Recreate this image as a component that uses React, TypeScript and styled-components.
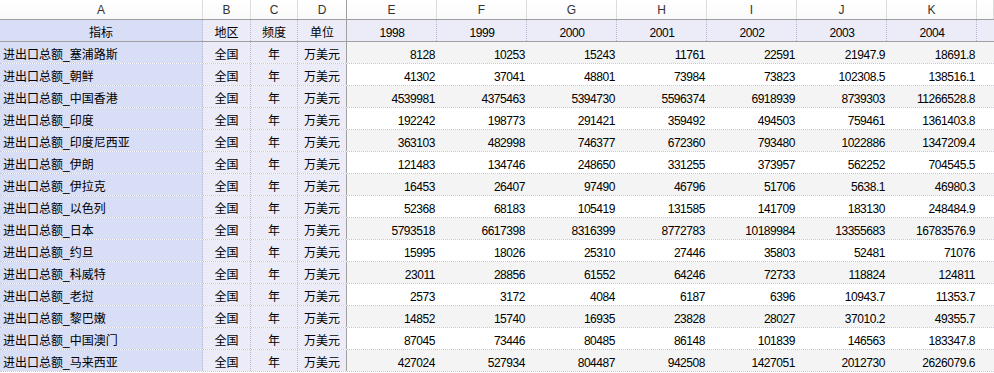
import React from "react";
import styled, { createGlobalStyle, css } from "styled-components";

const GlobalStyle = createGlobalStyle`
  html, body {
    margin: 0;
    padding: 0;
    background: #ffffff;
  }
  body {
    font-family: "Liberation Sans", "Noto Sans CJK SC", sans-serif;
    color: #000;
  }
`;

const COLS = "203px 48px 47px 49px repeat(7, 90px) 1fr";

const Sheet = styled.div`
  width: 994px;
  height: 373px;
  overflow: hidden;
  background: #fff;
`;

const Row = styled.div`
  display: grid;
  grid-template-columns: ${COLS};
`;

const LetterRow = styled(Row)`
  height: 20px;
  border-bottom: 1px solid #a0a0a0;
  box-sizing: border-box;
  background: linear-gradient(#ffffff, #fafafa);
`;

const Letter = styled.div<{ $freeze?: boolean }>`
  display: flex;
  align-items: flex-end;
  justify-content: center;
  padding-bottom: 1px;
  font-size: 12px;
  line-height: 15px;
  color: #333;
  box-sizing: border-box;
  border-right: 1px solid ${(p) => (p.$freeze ? "#a0a0a0" : "#dcdcdc")};
`;

type Tone = "key" | "dim" | "even" | "odd" | "head";

const toneBg: Record<Tone, string> = {
  key: "#d9def7",
  dim: "#ececf9",
  head: "#ececf9",
  even: "#f4f4f4",
  odd: "#ffffff",
};

const Cell = styled.div<{
  $tone: Tone;
  $align?: "left" | "center" | "right";
  $edge?: "dot" | "solid" | "none";
  $num?: boolean;
}>`
  display: flex;
  align-items: flex-end;
  overflow: hidden;
  white-space: nowrap;
  box-sizing: border-box;
  padding: 0 3px 1px 3px;
  background: ${(p) => toneBg[p.$tone]};
  justify-content: ${(p) =>
    p.$align === "right" ? "flex-end" : p.$align === "center" ? "center" : "flex-start"};
  font-size: 12px;
  line-height: 14px;
  color: #000;
  ${(p) =>
    p.$edge === "solid"
      ? css`border-right: 1px solid #a0a0a0;`
      : p.$edge === "dot"
      ? css`border-right: 1px dotted #b4b7cf;`
      : ""}
  ${(p) =>
    p.$num &&
    css`
      letter-spacing: -0.45px;
      padding-right: 2px;
    `}
`;

const HeadRow = styled(Row)`
  height: 22px;
  border-bottom: 1px solid #a0a0a0;
  box-sizing: border-box;
`;

const DataRow = styled(Row)`
  height: 22px;
  box-sizing: border-box;
  border-bottom: 1px dotted #c6c7d6;
`;

const letters = ["A", "B", "C", "D", "E", "F", "G", "H", "I", "J", "K", ""];
const years = ["1998", "1999", "2000", "2001", "2002", "2003", "2004"];

const data: [string, (string | number)[]][] = [
  ["塞浦路斯", [8128, 10253, 15243, 11761, 22591, "21947.9", "18691.8"]],
  ["朝鲜", [41302, 37041, 48801, 73984, 73823, "102308.5", "138516.1"]],
  ["中国香港", [4539981, 4375463, 5394730, 5596374, 6918939, 8739303, "11266528.8"]],
  ["印度", [192242, 198773, 291421, 359492, 494503, 759461, "1361403.8"]],
  ["印度尼西亚", [363103, 482998, 746377, 672360, 793480, 1022886, "1347209.4"]],
  ["伊朗", [121483, 134746, 248650, 331255, 373957, 562252, "704545.5"]],
  ["伊拉克", [16453, 26407, 97490, 46796, 51706, "5638.1", "46980.3"]],
  ["以色列", [52368, 68183, 105419, 131585, 141709, 183130, "248484.9"]],
  ["日本", [5793518, 6617398, 8316399, 8772783, 10189984, 13355683, "16783576.9"]],
  ["约旦", [15995, 18026, 25310, 27446, 35803, 52481, 71076]],
  ["科威特", [23011, 28856, 61552, 64246, 72733, 118824, 124811]],
  ["老挝", [2573, 3172, 4084, 6187, 6396, "10943.7", "11353.7"]],
  ["黎巴嫩", [14852, 15740, 16935, 23828, 28027, "37010.2", "49355.7"]],
  ["中国澳门", [87045, 73446, 80485, 86148, 101839, 146563, "183347.8"]],
  ["马来西亚", [427024, 527934, 804487, 942508, 1427051, 2012730, "2626079.6"]],
];

export default function App() {
  return (
    <Sheet>
      <GlobalStyle />
      <LetterRow>
        {letters.map((l, i) => (
          <Letter key={i} $freeze={i === 3}>
            {l}
          </Letter>
        ))}
      </LetterRow>

      <HeadRow>
        <Cell $tone="key" $align="center" $edge="dot">指标</Cell>
        <Cell $tone="dim" $align="center" $edge="dot">地区</Cell>
        <Cell $tone="dim" $align="center" $edge="dot">频度</Cell>
        <Cell $tone="dim" $align="center" $edge="solid">单位</Cell>
        {years.map((y) => (
          <Cell key={y} $tone="head" $align="center" $edge="dot" $num>
            {y}
          </Cell>
        ))}
        <Cell $tone="head" />
      </HeadRow>

      {data.map(([name, values], i) => {
        const tone: Tone = i % 2 === 0 ? "even" : "odd";
        return (
          <DataRow key={name}>
            <Cell $tone="key" $edge="dot">进出口总额_{name}</Cell>
            <Cell $tone="dim" $align="center" $edge="dot">全国</Cell>
            <Cell $tone="dim" $align="center" $edge="dot">年</Cell>
            <Cell $tone="dim" $align="center" $edge="solid">万美元</Cell>
            {values.map((v, j) => (
              <Cell key={j} $tone={tone} $align="right" $num>
                {v}
              </Cell>
            ))}
            <Cell $tone={tone} />
          </DataRow>
        );
      })}
    </Sheet>
  );
}
